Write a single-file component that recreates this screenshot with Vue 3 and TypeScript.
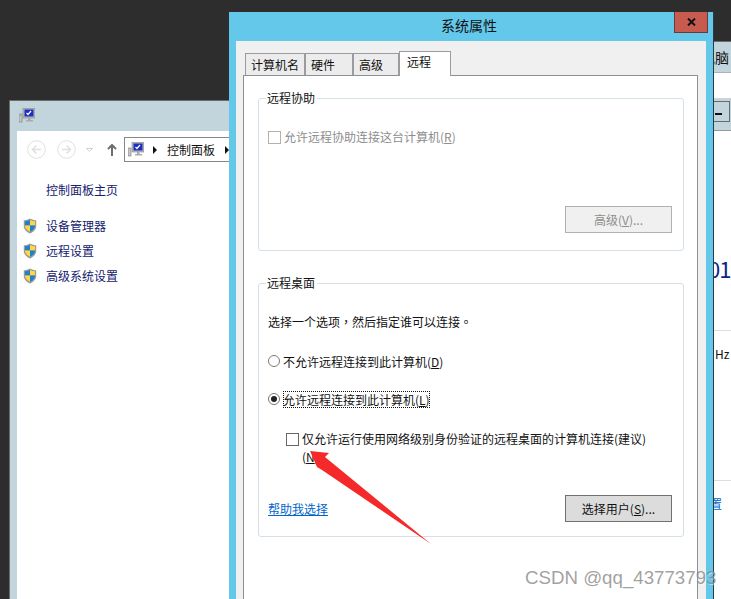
<script setup lang="ts">
const tabs = [
  { label: "计算机名", width: 60 },
  { label: "硬件", width: 48 },
  { label: "高级", width: 46 },
];
const links = ["设备管理器", "远程设置", "高级系统设置"];
</script>

<template>
  <div class="desktop">
    <!-- window behind, left -->
    <section class="win win--left">
      <header class="win__title">
        <svg class="pc-icon" viewBox="0 0 16 15" width="16" height="15">
          <rect x="0" y="6" width="3" height="8" fill="#c8c8c8" stroke="#777" stroke-width=".6" />
          <rect x="1" y="7" width="1" height="1" fill="#4c4" />
          <rect x="4" y="0.5" width="12" height="9.5" fill="#b9b9b9" stroke="#888" stroke-width=".6" />
          <rect x="5.5" y="1.5" width="9" height="7" fill="#1b2fc4" />
          <path d="M7.5 5l1.5 1.5 3-3.500" fill="none" stroke="#fff" stroke-width="1.2" />
          <path d="M9 10h2.500v2H14v1.500H7V12h2z" fill="#aaa" />
        </svg>
      </header>
      <div class="win__client">
        <div class="nav">
          <svg class="nav__btn" viewBox="0 0 19 19" width="19" height="19">
            <circle cx="9.5" cy="9.5" r="8.8" fill="#fff" stroke="#e0e0e0" />
            <path d="M14 9.5H6M9.5 5.5l-4 4 4 4" fill="none" stroke="#e0e0e0" stroke-width="1.5" />
          </svg>
          <svg class="nav__btn nav__btn--next" viewBox="0 0 19 19" width="19" height="19">
            <circle cx="9.5" cy="9.5" r="8.8" fill="#fff" stroke="#e0e0e0" />
            <path d="M5 9.5h8M9.5 5.5l4 4-4 4" fill="none" stroke="#e0e0e0" stroke-width="1.5" />
          </svg>
          <svg class="nav__drop" viewBox="0 0 7 4" width="7" height="4">
            <path d="M.5.5h6L3.500 3.500z" fill="#fff" stroke="#d0d0d0" />
          </svg>
          <svg class="nav__up" viewBox="0 0 10 12" width="10" height="12">
            <path d="M5 1v11M1 5l4-4 4 4" fill="none" stroke="#6d6d6d" stroke-width="2" />
          </svg>
          <div class="address">
            <svg viewBox="0 0 16 15" width="16" height="15">
              <rect x="0" y="6" width="3" height="8" fill="#c8c8c8" stroke="#777" stroke-width=".6" />
              <rect x="4" y="0.5" width="12" height="9.5" fill="#b9b9b9" stroke="#888" stroke-width=".6" />
              <rect x="5.500" y="1.500" width="9" height="7" fill="#1b2fc4" />
              <path d="M7.500 5l1.500 1.500 3-3.500" fill="none" stroke="#fff" stroke-width="1.200" />
              <path d="M9 10h2.500v2H14v1.500H7V12h2z" fill="#aaa" />
            </svg>
            <span class="caret"></span>
            <span class="address__text">控制面板</span>
            <span class="caret"></span>
          </div>
        </div>
        <div class="side">
          <a class="side__home">控制面板主页</a>
          <a v-for="link in links" :key="link" class="side__link">
            <svg viewBox="0 0 14 16" width="14" height="16">
              <path d="M7 .5C5 1.800 3 2.200 .8 2.300V8c0 3.500 3 6 6.200 7.500C10.200 14 13.200 11.500 13.200 8V2.300C11 2.200 9 1.800 7 .5z" fill="#9a9a9a" />
              <path d="M7 2v5.500H2V3.300C3.800 3.200 5.500 2.800 7 2z" fill="#1f7fd0" />
              <path d="M7 2v5.500h5V3.300C10.200 3.200 8.500 2.800 7 2z" fill="#ffd83a" />
              <path d="M2 7.500h5v6.300C4.500 12.500 2 10.500 2 8z" fill="#ffd83a" />
              <path d="M12 7.500H7v6.300c2.500-1.300 5-3.300 5-5.800z" fill="#1f7fd0" />
            </svg>
            <span>{{ link }}</span>
          </a>
        </div>
      </div>
    </section>

    <!-- window behind, right -->
    <section class="win win--right">
      <div class="right__title"><span>电脑</span></div>
      <div class="right__gap"></div>
      <div class="right__bar"><span class="right__min"></span></div>
      <div class="right__body">
        <div class="right__year">012</div>
        <div class="right__hz">Hz</div>
        <div class="right__link">置</div>
      </div>
    </section>

    <!-- system properties dialog -->
    <section class="dialog">
      <header class="dialog__title">
        <span>系统属性</span>
        <span class="dialog__close">
          <svg viewBox="0 0 9 8" width="9" height="8">
            <path d="M1 .5l7 7M8 .5l-7 7" stroke="#111" stroke-width="2" fill="none" />
          </svg>
        </span>
      </header>
      <div class="dialog__panel">
        <nav class="tabs">
          <span
            v-for="tab in tabs"
            :key="tab.label"
            class="tab"
            :style="{ width: tab.width + 'px' }"
          >{{ tab.label }}</span>
          <span class="tab tab--active">远程</span>
        </nav>
        <div class="pane">
          <fieldset class="group group--assist">
            <legend>远程协助</legend>
            <label class="check check--disabled">
              <span class="check__box"></span>
              <span>允许远程协助连接这台计算机(<u>R</u>)</span>
            </label>
            <div class="group__foot">
              <span></span>
              <button class="btn btn--disabled" type="button">高级(<u>V</u>)...</button>
            </div>
          </fieldset>

          <fieldset class="group group--desktop">
            <legend>远程桌面</legend>
            <p class="hint">选择一个选项，然后指定谁可以连接。</p>
            <label class="radio">
              <span class="radio__dot"></span>
              <span>不允许远程连接到此计算机(<u>D</u>)</span>
            </label>
            <label class="radio radio--on">
              <span class="radio__dot"></span>
              <span class="focus">允许远程连接到此计算机(<u>L</u>)</span>
            </label>
            <label class="check check--nla">
              <span class="check__box"></span>
              <span>仅允许运行使用网络级别身份验证的远程桌面的计算机连接(建议)<br />(<u>N</u>)</span>
            </label>
            <div class="group__foot group__foot--users">
              <a class="help">帮助我选择</a>
              <button class="btn" type="button">选择用户(<u>S</u>)...</button>
            </div>
          </fieldset>
        </div>
      </div>
    </section>

    <svg class="arrow" viewBox="0 0 731 599" width="731" height="599">
      <polygon points="310,451 329,453 325,457 431,544 322,470 317,467" fill="#f5292a" />
    </svg>
    <div class="watermark">CSDN @qq_43773793</div>
  </div>
</template>

<style>
html,
body {
  margin: 0;
  background: #2d2d2d;
}
</style>

<style scoped>
.desktop {
  position: relative;
  width: 731px;
  height: 599px;
  overflow: hidden;
  background: #2d2d2d;
  font-family: "Noto Sans CJK SC", "Liberation Sans", sans-serif;
  font-size: 12px;
  color: #111;
}

.win {
  position: absolute;
  box-sizing: border-box;
  background: #c2d5dc;
}

.win--left {
  left: 9px;
  top: 100px;
  width: 225px;
  height: 499px;
  border: 1px solid #6b6b6b;
  border-bottom: 0;
  display: flex;
  flex-direction: column;
}

.win__title {
  height: 30px;
  flex: none;
  padding: 7px 0 0 9px;
  box-sizing: border-box;
}

.pc-icon {
  display: block;
}

.win__client {
  flex: 1;
  margin-left: 7px;
  background: #fff;
}

.nav {
  display: flex;
  align-items: center;
  height: 29px;
  margin-top: 4px;
  padding-left: 10px;
}

.nav > * {
  flex: none;
}

.nav__btn--next {
  margin-left: 11px;
}

.nav__drop {
  margin-left: 10px;
}

.nav__up {
  margin-left: 14px;
}

.address {
  display: flex;
  align-items: center;
  box-sizing: border-box;
  width: 120px;
  height: 25px;
  margin-left: 7px;
  padding-left: 3px;
  border: 1px solid #868686;
  font-size: 12px;
}

.address svg {
  flex: none;
}

.address__text {
  margin-right: 1px;
  white-space: nowrap;
}

.caret {
  flex: none;
  width: 0;
  height: 0;
  margin: 0 10px 0 9px;
  border-left: 4px solid #111;
  border-top: 4px solid transparent;
  border-bottom: 4px solid transparent;
}

.side {
  display: flex;
  flex-direction: column;
  padding: 16px 0 0 6px;
}

.side__home {
  margin: 0 0 13px 23px;
  height: 20px;
  line-height: 20px;
  color: #14206e;
}

.side__link {
  display: flex;
  align-items: center;
  gap: 9px;
  height: 25px;
  color: #14206e;
}

.win--right {
  left: 700px;
  top: 41px;
  width: 60px;
  height: 558px;
  border-top: 1px solid #6b6b6b;
  display: flex;
  flex-direction: column;
}

.right__title {
  height: 30px;
  padding-left: 1px;
  font-size: 14px;
  line-height: 30px;
  white-space: nowrap;
}

.right__gap {
  height: 27px;
  background: #fff;
  border-top: 1px solid #a8b4ba;
  border-bottom: 1px solid #d2d2d2;
  box-sizing: border-box;
}

.right__bar {
  height: 32px;
  padding-top: 2px;
  box-sizing: border-box;
  border-bottom: 1px solid #999;
}

.right__min {
  display: block;
  width: 30px;
  height: 21px;
  box-sizing: border-box;
  border: 1px solid #6b6b6b;
  position: relative;
}

.right__min::after {
  content: "";
  position: absolute;
  left: 14px;
  top: 11px;
  width: 7px;
  height: 2px;
  background: #111;
}

.right__body {
  flex: 1;
  background: #fff;
}

.right__year {
  height: 200px;
  padding: 122px 0 0 8px;
  box-sizing: border-box;
  font-size: 22px;
  letter-spacing: -1px;
  line-height: 30px;
  color: #0f2489;
  border-bottom: 1px solid #ddd;
}

.right__hz {
  height: 150px;
  padding: 14px 0 0 15px;
  box-sizing: border-box;
  font-size: 12px;
  line-height: 18px;
  border-bottom: 1px solid #ddd;
}

.right__link {
  padding: 14px 0 0 10px;
  color: #0066cc;
  line-height: 18px;
}

.dialog {
  position: absolute;
  left: 229px;
  top: 12px;
  width: 485px;
  height: 587px;
  box-sizing: border-box;
  padding: 0 7px 0 7px;
  background: #63c8ea;
  border-right: 1px solid #2c3a44;
  display: flex;
  flex-direction: column;
}

.dialog__title {
  position: relative;
  height: 29px;
  flex: none;
  box-sizing: border-box;
  padding-right: 4px;
  text-align: center;
  font-size: 14px;
  line-height: 27px;
}

.dialog__close {
  position: absolute;
  right: -2px;
  top: 0;
  width: 34px;
  height: 21px;
  box-sizing: border-box;
  display: flex;
  align-items: center;
  justify-content: center;
  background: #c75b50;
  border: 1px solid #6b3a36;
  border-top: 0;
}

.dialog__panel {
  flex: 1;
  background: #f0f0f0;
  padding: 10px 8px 0 7px;
  display: flex;
  flex-direction: column;
  min-height: 0;
}

.tabs {
  position: relative;
  z-index: 1;
  display: flex;
  height: 24px;
  padding-left: 2px;
  align-items: flex-end;
  flex: none;
}

.tab {
  box-sizing: border-box;
  height: 22px;
  padding-left: 5px;
  background: #ececec;
  border: 1px solid #9a9aa0;
  border-bottom: 0;
  line-height: 21px;
  white-space: nowrap;
}

.tab--active {
  width: 52px;
  height: 25px;
  padding-left: 7px;
  margin-bottom: -1px;
  background: #fff;
  line-height: 20px;
}

.pane {
  flex: 1;
  background: #fff;
  border: 1px solid #8e8e96;
  border-bottom: 0;
  padding: 14px 13px 0 14px;
}

.group {
  margin: 0;
  padding: 0 11px 0 9px;
  border: 1px solid #d5dfe6;
  border-radius: 3px;
  min-width: 0;
  box-sizing: border-box;
}

.group legend {
  padding: 0 2px 0 1px;
  margin-left: -2px;
  font-size: 12px;
  line-height: 15px;
  height: 17px;
}

.group--assist {
  height: 161px;
}

.group--desktop {
  height: 262px;
  margin-top: 24px;
}

.check {
  display: flex;
  gap: 3px;
  line-height: 18px;
}

.check--disabled {
  margin-top: 21px;
  color: #8d8d8d;
  align-items: center;
}

.check__box {
  width: 11px;
  height: 11px;
  flex: none;
  border: 1px solid #8e8f8f;
  background: #fff;
}

.check--disabled .check__box {
  border-color: #b1b1b1;
}

.group__foot {
  display: flex;
  justify-content: space-between;
  align-items: center;
  margin-top: 60px;
}

.btn {
  width: 107px;
  height: 27px;
  padding: 0;
  box-sizing: border-box;
  background: #dcdcdc;
  border: 1px solid #707070;
  font: inherit;
  color: #111;
}

.btn--disabled {
  background: #f0f0f0;
  border-color: #adb2b5;
  color: #8d8d8d;
}

.hint {
  margin: 21px 0 0;
  font-family: "Noto Sans CJK TC", "Noto Sans CJK SC", sans-serif;
  line-height: 18px;
}

.radio {
  display: flex;
  align-items: center;
  gap: 3px;
  height: 18px;
  margin-top: 21px;
}

.radio--on {
  margin-top: 20px;
}

.radio__dot {
  position: relative;
  width: 10px;
  height: 10px;
  flex: none;
  border: 1px solid #7a7a7a;
  border-radius: 50%;
}

.radio--on .radio__dot::after {
  content: "";
  position: absolute;
  inset: 2px;
  border-radius: 50%;
  background: #222;
}

.focus {
  outline: 1px dotted #111;
  outline-offset: -1px;
  white-space: nowrap;
}

.check--nla {
  margin: 22px 0 0 18px;
  gap: 3px;
  white-space: nowrap;
  line-height: 18px;
}

.check--nla .check__box {
  margin-top: 3px;
  border-color: #666;
}

.group__foot--users {
  margin-top: 29px;
}

.help {
  color: #0066cc;
  text-decoration: underline;
}

.arrow {
  position: absolute;
  left: 0;
  top: 0;
  pointer-events: none;
}

.watermark {
  position: absolute;
  left: 525px;
  top: 565px;
  font-family: "Liberation Sans", sans-serif;
  font-size: 18.7px;
  line-height: 26px;
  white-space: nowrap;
  color: rgb(130 130 130 / 75%);
  text-shadow: 1px 1px 1px rgb(255 255 255 / 50%);
}
</style>
